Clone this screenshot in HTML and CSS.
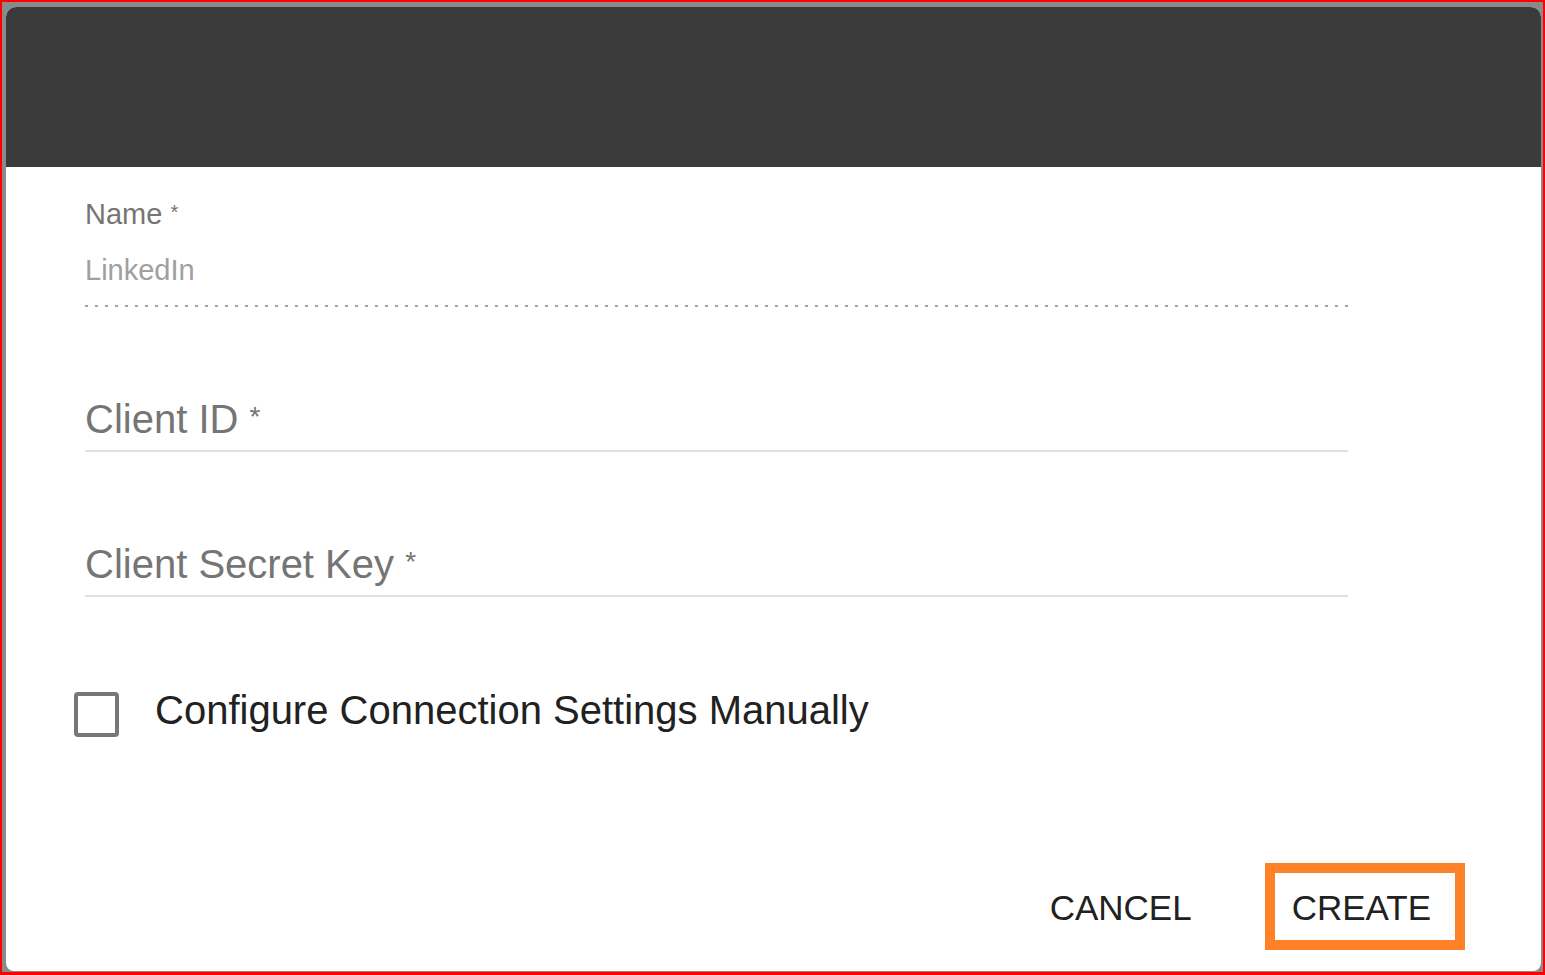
FILE: index.html
```html
<!DOCTYPE html>
<html lang="en">
<head>
    <meta charset="UTF-8">
    <meta name="viewport" content="width=device-width, initial-scale=1.0">
    <title>New LinkedIn Connection</title>
    <link rel="stylesheet" href="styles.css">
</head>
<body>
    <div class="screen">
        <div class="dialog">
            <div class="dialog-header"></div>

            <!-- Connection form -->
            <form class="dialog-body" id="connectionForm">
                <div class="field field-readonly">
                    <label class="field-label" for="name">Name <span class="req">*</span></label>
                    <input class="field-value" id="name" type="text" value="LinkedIn" disabled>
                    <div class="field-line dotted"></div>
                </div>

                <div class="field">
                    <div class="field-box">
                        <input class="field-input" id="clientId" type="text">
                        <label class="field-hint" for="clientId">Client ID <span class="req">*</span></label>
                    </div>
                    <div class="field-line"></div>
                </div>

                <div class="field">
                    <div class="field-box">
                        <input class="field-input" id="clientSecret" type="text">
                        <label class="field-hint" for="clientSecret">Client Secret Key <span class="req">*</span></label>
                    </div>
                    <div class="field-line"></div>
                </div>

                <label class="check-row" for="manual">
                    <input type="checkbox" id="manual">
                    <span class="check-box"></span>
                    <span class="check-label">Configure Connection Settings Manually</span>
                </label>
            </form>

            <div class="dialog-actions">
                <button type="button" class="btn">CANCEL</button>
                <button type="submit" form="connectionForm" class="btn btn-highlight">CREATE</button>
            </div>
        </div>
    </div>
</body>
</html>
```

FILE: styles.css
```css
body {
    margin: 0;
    font-family: 'Liberation Sans', Arial, sans-serif;
}
.screen {
    width: 1545px;
    height: 975px;
    box-sizing: border-box;
    border: 2px solid #ff0000;
    border-bottom-width: 3px;
    background: #8a8a8a;
    padding: 5px 2px 1px 4px;
    display: flex;
}
.dialog {
    flex: 1;
    background: #fff;
    border-radius: 10px 10px 8px 8px;
    overflow: hidden;
    display: flex;
    flex-direction: column;
}
.dialog-header {
    height: 160px;
    background: #3b3b3b;
    flex-shrink: 0;
}
.dialog-body {
    flex: 1;
    padding: 29px 0 0 79px;
    width: 1263px;
}
.field {
    display: flex;
    flex-direction: column;
}
.req {
    font-size: 0.7em;
    line-height: 0;
    vertical-align: 0.24em;
}
.field-label {
    font-size: 29px;
    line-height: 36px;
    color: #757575;
}
.field-value {
    font-family: inherit;
    font-size: 29px;
    line-height: 36px;
    height: 36px;
    color: #a0a0a0;
    border: none;
    background: none;
    padding: 0;
    margin-top: 20px;
    margin-bottom: 17px;
}
.field-line {
    height: 2px;
    background: #e0e0e0;
}
.field-line.dotted {
    background: repeating-linear-gradient(to right, #a3a3a3 0 3px, transparent 3px 10px);
}
.field-box {
    position: relative;
    margin-top: 91px;
    margin-bottom: 6px;
}
.field + .field .field-box {
    margin-top: 88px;
    margin-bottom: 7px;
}
.field-input {
    display: block;
    width: 100%;
    font-family: inherit;
    font-size: 40px;
    line-height: 48px;
    height: 48px;
    border: none;
    background: none;
    padding: 0;
    outline: none;
    color: #212121;
}
.field-hint {
    position: absolute;
    left: 0;
    top: 0;
    font-size: 40px;
    line-height: 48px;
    color: #757575;
    pointer-events: none;
}
.check-row {
    display: flex;
    align-items: flex-start;
    margin: 95px 0 0 -11px;
    cursor: pointer;
}
.check-row input {
    display: none;
}
.check-box {
    width: 45px;
    height: 45px;
    box-sizing: border-box;
    border: 4px solid #777;
    border-radius: 4px;
    flex-shrink: 0;
}
.check-label {
    font-size: 40px;
    line-height: 48px;
    color: #212121;
    margin: -6px 0 0 36px;
}
.dialog-actions {
    display: flex;
    justify-content: flex-end;
    gap: 39px;
    padding: 0 76px 21px 0;
}
.btn {
    font-family: inherit;
    font-size: 35px;
    line-height: 47px;
    color: #212121;
    background: #fff;
    border: 10px solid transparent;
    padding: 11px 24px 9px 17px;
    cursor: pointer;
}
.btn-highlight {
    border-color: #fe8127;
}
```
